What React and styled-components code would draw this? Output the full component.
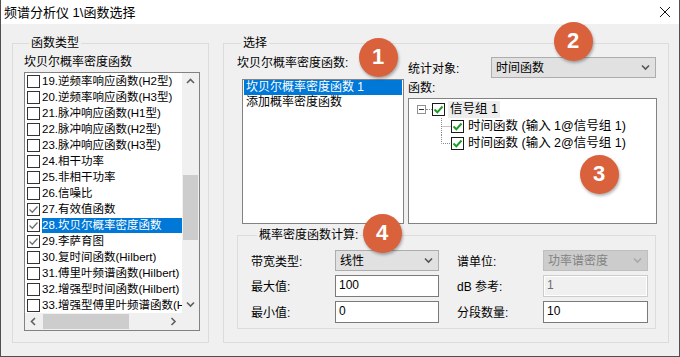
import React from "react";
import styled, { createGlobalStyle } from "styled-components";

const GlobalStyle = createGlobalStyle`
  html, body {
    margin: 0;
    padding: 0;
    background: #fff;
  }
  body {
    font-family: "Liberation Sans", "Noto Sans CJK SC", sans-serif;
    font-size: 12px;
    color: #000;
  }
`;

const functionItems = [
  { text: "19.逆频率响应函数(H2型)" },
  { text: "20.逆频率响应函数(H3型)" },
  { text: "21.脉冲响应函数(H1型)" },
  { text: "22.脉冲响应函数(H2型)" },
  { text: "23.脉冲响应函数(H3型)" },
  { text: "24.相干功率" },
  { text: "25.非相干功率" },
  { text: "26.信噪比" },
  { text: "27.有效值函数", checked: true },
  { text: "28.坎贝尔概率密度函数", checked: true, selected: true },
  { text: "29.李萨育图", checked: true },
  { text: "30.复时间函数(Hilbert)" },
  { text: "31.傅里叶频谱函数(Hilbert)" },
  { text: "32.增强型时间函数(Hilbert)" },
  { text: "33.增强型傅里叶频谱函数(Hilbert)" },
];

const badges = [
  { n: 1, x: 377, y: 57 },
  { n: 2, x: 572, y: 41 },
  { n: 3, x: 598, y: 174 },
  { n: 4, x: 381, y: 233 },
];

const Chevron = ({ dir = "down", color = "#606060", size = 9 }) => {
  const pts = {
    up: "1,6 4.5,2.5 8,6",
    down: "1,2.5 4.5,6 8,2.5",
    left: "6,1 2.5,4.5 6,8",
    right: "2.5,1 6,4.5 2.5,8",
  }[dir];
  return (
    <svg width={size} height={size} viewBox="0 0 9 9">
      <polyline points={pts} fill="none" stroke={color} strokeWidth="1.6" />
    </svg>
  );
};

const Check = ({ color, width }) => (
  <svg width="11" height="11" viewBox="0 0 11 11">
    <polyline points="1.5,5.5 4.3,8.3 9.5,2.5" fill="none" stroke={color} strokeWidth={width} />
  </svg>
);

const App = () => {
  return (
    <>
      <GlobalStyle />
      <Window>
        <TitleBar>
          <Title>频谱分析仪 1\函数选择</Title>
          <svg width="12" height="12" viewBox="0 0 12 12">
            <path d="M1 1 L11 11 M11 1 L1 11" stroke="#111" strokeWidth="1" />
          </svg>
        </TitleBar>

        <Body>
          <Group $w={197} $pad="3px 8px 11px 11px">
            <Legend $ml={5}>函数类型</Legend>
            <Caption>坎贝尔概率密度函数</Caption>
            <ListBox>
              <ListRows>
                {functionItems.map((it) => (
                  <ItemRow key={it.text}>
                    <Box $tone="#333">
                      {it.checked && <Check color="#6f6f6f" width={1.3} />}
                    </Box>
                    <ItemText $selected={it.selected}>{it.text}</ItemText>
                  </ItemRow>
                ))}
              </ListRows>
              <VScroll>
                <ArrowButton>
                  <Chevron dir="up" />
                </ArrowButton>
                <VThumb />
                <Spacer />
                <ArrowButton>
                  <Chevron dir="down" />
                </ArrowButton>
              </VScroll>
              <HScroll>
                <ArrowButton>
                  <Chevron dir="left" />
                </ArrowButton>
                <HThumb />
                <Spacer />
                <ArrowButton>
                  <Chevron dir="right" />
                </ArrowButton>
              </HScroll>
              <Corner />
            </ListBox>
          </Group>

          <Group $w={446} $pad="4px 11px 13px 13px">
            <Legend $ml={4}>选择</Legend>
            <TopArea>
              <LeftCol>
                <Caption>坎贝尔概率密度函数:</Caption>
                <PlainList>
                  <PlainItem $selected>坎贝尔概率密度函数 1</PlainItem>
                  <PlainItem>添加概率密度函数</PlainItem>
                </PlainList>
              </LeftCol>
              <RightCol>
                <ComboRow>
                  <span>统计对象:</span>
                  <Combo $w={165}>
                    <span>时间函数</span>
                    <Chevron dir="down" color="#555" />
                  </Combo>
                </ComboRow>
                <Caption $mt={2}>函数:</Caption>
                <TreeBox>
                  <TreeRow>
                    <Expander>
                      <MinusBar />
                    </Expander>
                    <DotLine />
                    <Box $tone="#1a1a1a">
                      <Check color="#1f9a27" width={2} />
                    </Box>
                    <TreeLabel $focus>信号组 1</TreeLabel>
                  </TreeRow>
                  <TreeRow>
                    <Guide>
                      <svg width="42" height="17" viewBox="0 0 42 17">
                        <path d="M32.5 0 V17 M32.5 8.5 H42" stroke="#8c8c8c" strokeDasharray="1 1" />
                      </svg>
                    </Guide>
                    <Box $tone="#1a1a1a">
                      <Check color="#1f9a27" width={2} />
                    </Box>
                    <TreeLabel>时间函数 (输入 1@信号组 1)</TreeLabel>
                  </TreeRow>
                  <TreeRow>
                    <Guide>
                      <svg width="42" height="17" viewBox="0 0 42 17">
                        <path d="M32.5 0 V8.5 H42" stroke="#8c8c8c" strokeDasharray="1 1" fill="none" />
                      </svg>
                    </Guide>
                    <Box $tone="#1a1a1a">
                      <Check color="#1f9a27" width={2} />
                    </Box>
                    <TreeLabel>时间函数 (输入 2@信号组 1)</TreeLabel>
                  </TreeRow>
                </TreeBox>
              </RightCol>
            </TopArea>

            <InnerGroup>
              <Legend $ml={6}>概率密度函数计算:</Legend>
              <FormGrid>
                <FieldLabel>带宽类型:</FieldLabel>
                <Combo $w={104}>
                  <span>线性</span>
                  <Chevron dir="down" color="#555" />
                </Combo>
                <FieldLabel $indent>谱单位:</FieldLabel>
                <Combo $w={105} $disabled>
                  <span>功率谱密度</span>
                  <Chevron dir="down" color="#a8a8a8" />
                </Combo>

                <FieldLabel>最大值:</FieldLabel>
                <TextInput>100</TextInput>
                <FieldLabel $indent>dB 参考:</FieldLabel>
                <TextInput $disabled>1</TextInput>

                <FieldLabel>最小值:</FieldLabel>
                <TextInput>0</TextInput>
                <FieldLabel $indent>分段数量:</FieldLabel>
                <TextInput>10</TextInput>
              </FormGrid>
            </InnerGroup>
          </Group>
        </Body>

        {badges.map((b) => (
          <Badge key={b.n} style={{ left: b.x - 19.5, top: b.y - 19.5 }}>
            {b.n}
          </Badge>
        ))}
      </Window>
    </>
  );
};

export default App;

const Window = styled.div`
  position: relative;
  width: 680px;
  height: 357px;
  box-sizing: border-box;
  border: 1px solid #4f4f4f;
  border-top: none;
  background: #f0f0f0;
  display: flex;
  flex-direction: column;
  overflow: hidden;
`;

const TitleBar = styled.div`
  height: 24px;
  background: #fff;
  display: flex;
  align-items: center;
  justify-content: space-between;
  padding: 0 8px 0 3px;
  flex-shrink: 0;
`;

const Title = styled.div`
  font-size: 13px;
  line-height: 18px;
  margin-top: 1px;
`;

const Body = styled.div`
  display: flex;
  gap: 14px;
  padding: 11px 0 0 11px;
`;

const Group = styled.fieldset`
  margin: 0;
  min-width: 0;
  box-sizing: border-box;
  width: ${(p) => p.$w}px;
  padding: ${(p) => p.$pad};
  border: 1px solid #dcdcdc;
  display: flex;
  flex-direction: column;
`;

const Legend = styled.legend`
  padding: 0 2px;
  margin-left: ${(p) => p.$ml}px;
  line-height: 16px;
  height: 16px;
`;

const Caption = styled.div`
  line-height: 16px;
  height: 16px;
  margin-top: ${(p) => p.$mt || 0}px;
`;

const ListBox = styled.div`
  margin-top: 2px;
  width: 176px;
  height: 259px;
  box-sizing: border-box;
  border: 1px solid #828282;
  background: #fff;
  display: grid;
  grid-template-columns: 157px 17px;
  grid-template-rows: 240px 17px;
`;

const ListRows = styled.div`
  overflow: hidden;
  display: flex;
  flex-direction: column;
`;

const ItemRow = styled.div`
  height: 16px;
  flex-shrink: 0;
  display: flex;
  align-items: center;
  padding-left: 2px;
  white-space: nowrap;
`;

const Box = styled.span`
  width: 13px;
  height: 13px;
  box-sizing: border-box;
  border: 1px solid ${(p) => p.$tone};
  background: #fff;
  flex-shrink: 0;
  display: flex;
  align-items: center;
  justify-content: center;
`;

const ItemText = styled.span`
  flex: 1;
  min-width: 0;
  margin-left: 2px;
  height: 15px;
  font-size: 11.5px;
  line-height: 15px;
  background: ${(p) => (p.$selected ? "#0078d7" : "transparent")};
  color: ${(p) => (p.$selected ? "#fff" : "#000")};
`;

const VScroll = styled.div`
  background: #f0f0f0;
  display: flex;
  flex-direction: column;
  align-items: center;
`;

const HScroll = styled.div`
  background: #f0f0f0;
  display: flex;
  align-items: center;
`;

const Corner = styled.div`
  background: #f0f0f0;
`;

const ArrowButton = styled.div`
  width: 17px;
  height: 17px;
  display: flex;
  align-items: center;
  justify-content: center;
  flex-shrink: 0;
`;

const Spacer = styled.div`
  flex: 1;
`;

const VThumb = styled.div`
  width: 15px;
  height: 65px;
  margin-top: 85px;
  background: #cdcdcd;
`;

const HThumb = styled.div`
  width: 86px;
  height: 15px;
  margin-left: 1px;
  background: #cdcdcd;
`;

const TopArea = styled.div`
  display: flex;
  gap: 4px;
`;

const LeftCol = styled.div`
  width: 167px;
  display: flex;
  flex-direction: column;
`;

const PlainList = styled.div`
  margin: 8px 0 0 5px;
  width: 162px;
  height: 145px;
  box-sizing: border-box;
  border: 1px solid #828282;
  background: #fff;
  padding: 0 1px;
`;

const PlainItem = styled.div`
  height: 15px;
  line-height: 15px;
  padding-left: 2px;
  background: ${(p) => (p.$selected ? "#0078d7" : "transparent")};
  color: ${(p) => (p.$selected ? "#fff" : "#000")};
`;

const RightCol = styled.div`
  width: 249px;
  display: flex;
  flex-direction: column;
  padding-top: 2px;
`;

const ComboRow = styled.div`
  display: flex;
  align-items: center;
  justify-content: space-between;
  padding-right: 1px;
`;

const Combo = styled.div`
  width: ${(p) => p.$w}px;
  height: 21px;
  box-sizing: border-box;
  border: 1px solid ${(p) => (p.$disabled ? "#bfbfbf" : "#adadad")};
  background: ${(p) => (p.$disabled ? "#cccccc" : "#e1e1e1")};
  color: ${(p) => (p.$disabled ? "#838383" : "#000")};
  display: flex;
  align-items: center;
  justify-content: space-between;
  padding: 0 5px 0 4px;
  line-height: 16px;
`;

const TreeBox = styled.div`
  margin-top: 2px;
  height: 126px;
  box-sizing: border-box;
  border: 1px solid #828282;
  background: #fff;
  padding-top: 2px;
`;

const TreeRow = styled.div`
  height: 17px;
  display: flex;
  align-items: center;
`;

const Expander = styled.span`
  margin-left: 8px;
  width: 9px;
  height: 9px;
  box-sizing: border-box;
  border: 1px solid #919191;
  display: flex;
  align-items: center;
  justify-content: center;
`;

const MinusBar = styled.span`
  width: 5px;
  height: 1px;
  background: #333;
`;

const DotLine = styled.span`
  width: 6px;
  height: 0;
  border-top: 1px dotted #8c8c8c;
`;

const Guide = styled.span`
  width: 42px;
  height: 17px;
  display: flex;
`;

const TreeLabel = styled.span`
  margin-left: ${(p) => (p.$focus ? 3 : 4)}px;
  padding: 0 ${(p) => (p.$focus ? 2 : 0)}px;
  font-size: 12.5px;
  line-height: 17px;
  background: ${(p) => (p.$focus ? "#ededed" : "transparent")};
  white-space: nowrap;
`;

const InnerGroup = styled.fieldset`
  margin: 3px 0 0 0;
  min-width: 0;
  width: 419px;
  box-sizing: border-box;
  border: 1px solid #dcdcdc;
  padding: 7px 7px 5px 13px;
`;

const FormGrid = styled.div`
  display: grid;
  grid-template-columns: 84px 104px 104px 105px;
  grid-template-rows: 21px 22px 22px;
  row-gap: 4px;
  align-items: center;
`;

const FieldLabel = styled.span`
  line-height: 16px;
  padding-left: ${(p) => (p.$indent ? 18 : 0)}px;
  margin-top: 2px;
`;

const TextInput = styled.div`
  height: 22px;
  box-sizing: border-box;
  border: 1px solid ${(p) => (p.$disabled ? "#cccccc" : "#7a7a7a")};
  background: ${(p) => (p.$disabled ? "#f0f0f0" : "#fff")};
  box-shadow: ${(p) => (p.$disabled ? "inset 0 0 0 1px #fff" : "none")};
  color: ${(p) => (p.$disabled ? "#6d6d6d" : "#000")};
  padding-left: 3px;
  line-height: 19px;
`;

const Badge = styled.div`
  position: absolute;
  width: 39px;
  height: 39px;
  border-radius: 50%;
  background: #d9623c;
  color: #fff;
  font-family: "Liberation Sans", Arial, sans-serif;
  font-weight: bold;
  font-size: 22px;
  display: flex;
  align-items: center;
  justify-content: center;
  box-shadow: 1px 2px 3px rgba(0, 0, 0, 0.3);
`;
